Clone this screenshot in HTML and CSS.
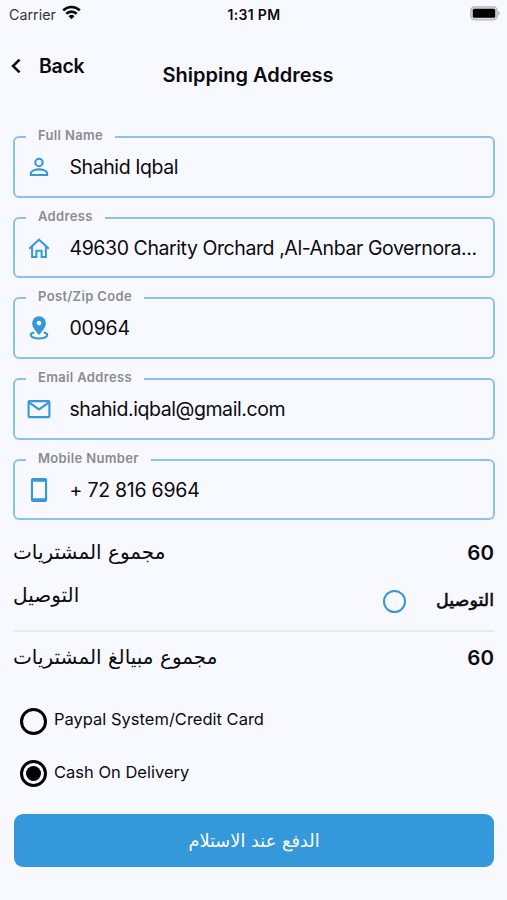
FILE: index.html
```
<!DOCTYPE html>
<html lang="en">
<head>
    <meta charset="UTF-8">
    <meta name="viewport" content="width=device-width, initial-scale=1.0">
    <title>Shipping Address</title>
    <link rel="stylesheet" href="styles.css">
</head>
<body>
    <div class="status">
        <div class="carrier">
            <span>Carrier</span>
            <svg width="19" height="15" viewBox="0 0 19 15" fill="none" stroke="#0b0b0f" stroke-width="2.7">
                <path d="M1.2 5.4a11.8 11.8 0 0 1 16.6 0"/>
                <path d="M4.3 8.8a7.4 7.4 0 0 1 10.4 0"/>
                <path d="M9.5 14.2l-3-3a4.3 4.3 0 0 1 6 0z" fill="#0b0b0f" stroke="none"/>
            </svg>
        </div>
        <div class="time">1:31 PM</div>
        <svg class="battery" width="31" height="15" viewBox="0 0 31 15">
            <rect x="0.8" y="0.8" width="26.4" height="13" rx="4" fill="#d9dade" stroke="#b4b5ba" stroke-width="1.3"/>
            <rect x="2.8" y="2.8" width="22.4" height="9" rx="1.5" fill="#000"/>
            <path d="M28.4 5v4.6a2.6 2.6 0 0 0 0-4.6z" fill="#a9aab0"/>
        </svg>
    </div>

    <div class="header">
        <div class="back">
            <svg width="12" height="16" viewBox="0 0 12 16" fill="none" stroke="#0b0b0f" stroke-width="2.6">
                <path d="M10.6 1.6L4 8l6.600 6.400"/>
            </svg>
            <span>Back</span>
        </div>
        <h1>Shipping Address</h1>
    </div>

    <fieldset>
        <legend>Full Name</legend>
        <div class="field">
            <svg width="24" height="26" viewBox="0 0 24 26" fill="none" stroke="#3498db" stroke-width="2.1">
                <circle cx="12" cy="8.500" r="3.700"/>
                <path d="M3.900 21v-1.700c0-2.600 4.600-3.900 8.100-3.900s8.100 1.300 8.100 3.900V21z"/>
            </svg>
            <span class="value">Shahid Iqbal</span>
        </div>
    </fieldset>
    <fieldset>
        <legend>Address</legend>
        <div class="field">
            <svg width="24" height="26" viewBox="0 0 24 26" fill="none" stroke="#3498db" stroke-width="2">
                <path d="M2.2 13.700L12 4.700l9.800 9"/>
                <path d="M5.100 11.500V22h4.300v-6.200h5.200V22h4.300V11.500"/>
            </svg>
            <span class="value">49630 Charity Orchard ,Al-Anbar Governora...</span>
        </div>
    </fieldset>
    <fieldset>
        <legend>Post/Zip Code</legend>
        <div class="field">
            <svg width="24" height="26" viewBox="0 0 24 26">
                <path d="M12 1.2a6.9 6.9 0 0 0-6.9 6.9c0 4.3 3.8 8.4 6.9 12 3.1-3.6 6.9-7.7 6.9-12A6.9 6.9 0 0 0 12 1.2zm0 4.600a2.300 2.300 0 1 1 0 4.600 2.300 2.300 0 0 1 0-4.600z" fill="#3498db" fill-rule="evenodd"/>
                <path d="M7.300 17.600c-2.300.5-3.600 1.400-3.600 2.400 0 1.900 3.700 3.500 8.300 3.500s8.300-1.600 8.300-3.500c0-1-1.300-1.900-3.600-2.400" fill="none" stroke="#3498db" stroke-width="2"/>
            </svg>
            <span class="value digits">00964</span>
        </div>
    </fieldset>
    <fieldset>
        <legend>Email Address</legend>
        <div class="field">
            <svg width="24" height="26" viewBox="0 0 24 26" fill="none" stroke="#3498db" stroke-width="2.1">
                <rect x="1.600" y="5.100" width="20.800" height="16" rx="1"/>
                <path d="M2 6.400l10 7 10-7"/>
            </svg>
            <span class="value">shahid.iqbal@gmail.com</span>
        </div>
    </fieldset>
    <fieldset>
        <legend>Mobile Number</legend>
        <div class="field">
            <svg width="24" height="26" viewBox="0 0 24 26">
                <path d="M5.900 1h12.200a2 2 0 0 1 2 2v20a2 2 0 0 1-2 2H5.900a2 2 0 0 1-2-2V3a2 2 0 0 1 2-2zM6 4.800v16.400h12V4.800z" fill="#3498db" fill-rule="evenodd"/>
            </svg>
            <span class="value phone">+ 72 816 6964</span>
        </div>
    </fieldset>

    <div class="row">
        <span class="arabic" dir="rtl">مجموع المشتريات</span>
        <span class="total">60</span>
    </div>
    <div class="row delivery">
        <span class="arabic" dir="rtl">التوصيل</span>
        <div class="option">
            <span class="circle"></span>
            <span class="arabic bold" dir="rtl">التوصيل</span>
        </div>
    </div>
    <div class="row sum">
        <span class="arabic" dir="rtl">مجموع مبيالغ المشتريات</span>
        <span class="total">60</span>
    </div>

    <div class="payment">
        <span class="radio"></span>
        <span class="label">Paypal System/Credit Card</span>
    </div>
    <div class="payment">
        <span class="radio checked"></span>
        <span class="label">Cash On Delivery</span>
    </div>

    <button type="button" dir="rtl">الدفع عند الاستلام</button>
</body>
</html>
```
FILE: styles.css
```
* {
    box-sizing: border-box;
}

body {
    margin: 0;
    height: 900px;
    overflow: hidden;
    background-color: #f8f9ff;
    color: #0b0b0f;
    font-family: Inter, "Liberation Sans", sans-serif;
    white-space: nowrap;
}

svg {
    display: block;
    flex: none;
}

.status {
    display: grid;
    grid-template-columns: 1fr auto 1fr;
    align-items: center;
    height: 28px;
    padding: 0 6px 0 9px;
    font-size: 14.3px;
}

.carrier {
    display: flex;
    align-items: center;
    gap: 6px;
    color: #333338;
}

.carrier svg {
    margin-top: -3px;
}

.time {
    margin-right: 2px;
    font-size: 14px;
    font-weight: 600;
    letter-spacing: 0.3px;
}

.battery {
    justify-self: end;
    margin-top: -1px;
}

.header {
    display: grid;
    grid-template-columns: 1fr auto 1fr;
    height: 101px;
    padding: 25px 20px 0 9px;
}

.back {
    display: flex;
    align-items: center;
    gap: 18px;
    height: 25px;
    font-size: 19.5px;
    font-weight: 600;
    letter-spacing: -0.3px;
}

h1 {
    margin: 10px 0 0;
    font-size: 20px;
    line-height: 24px;
    font-weight: 600;
}

/* the legend cuts the gap in the top border */
fieldset {
    width: 482px;
    min-width: 0;
    height: 68.65px;
    margin: 0 0 12px 13px;
    padding: 0 12px 0 11px;
    border: 2px solid #8ac2ec;
    border-radius: 6px;
}

legend {
    height: 16px;
    padding: 0 12px 4px;
    color: #8b8b91;
    font-size: 13px;
    line-height: 12px;
    font-weight: 600;
    letter-spacing: 0.35px;
}

.field {
    display: flex;
    align-items: center;
    gap: 18.5px;
    height: 44px;
    padding-left: 1px;
}

.value {
    font-size: 19.5px;
    line-height: 24px;
    letter-spacing: -0.42px;
}

.digits {
    letter-spacing: -0.2px;
}

.phone {
    letter-spacing: -0.25px;
}

.row {
    display: flex;
    align-items: center;
    justify-content: space-between;
    height: 40px;
    margin: 0 13px;
}

.delivery {
    height: 60px;
    border-bottom: 2px solid #e8e9ee;
}

.delivery > .arabic {
    margin-bottom: 12px;
}

.sum {
    height: 50px;
}

.arabic {
    font-family: "DejaVu Sans", sans-serif;
    font-size: 20px;
    line-height: 24px;
}

.total {
    font-size: 20.5px;
    font-weight: 600;
}

.option {
    display: flex;
    align-items: center;
    gap: 30px;
}

.circle {
    width: 23px;
    height: 23px;
    border: 2px solid #3498db;
    border-radius: 50%;
}

.bold {
    margin-top: -3px;
    font-size: 17.5px;
    -webkit-text-stroke: 0.6px #0b0b0f;
}

.payment {
    display: flex;
    align-items: center;
    gap: 7px;
    height: 52.5px;
    margin-left: 20px;
    font-size: 16.5px;
}

.sum + .payment {
    margin-top: 13px;
}

.radio {
    display: flex;
    width: 27px;
    height: 27px;
    border: 3px solid #000;
    border-radius: 50%;
}

.checked::after {
    content: "";
    width: 15px;
    height: 15px;
    margin: auto;
    border-radius: 50%;
    background-color: #000;
}

.label {
    margin-top: -4px;
}

button {
    display: block;
    width: 480px;
    height: 53px;
    margin: 14px 0 0 14px;
    padding: 0;
    border: 0;
    border-radius: 9px;
    background-color: #3498db;
    color: #fff;
    font-family: "DejaVu Sans", sans-serif;
    font-size: 17.8px;
}
```
